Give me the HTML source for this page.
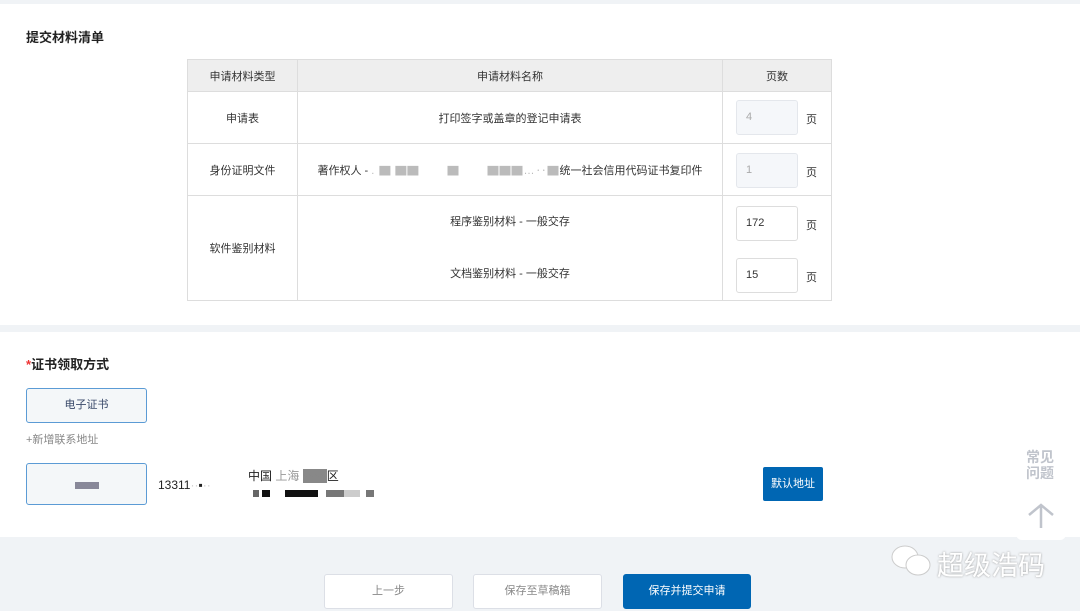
<!DOCTYPE html>
<html><head><meta charset="utf-8"><style>
*{box-sizing:border-box;margin:0;padding:0}
body{width:1080px;height:611px;background:#f0f3f6;font-family:"Liberation Sans","Noto Sans CJK SC",sans-serif;position:relative;overflow:hidden;color:#333;font-size:12px}
.card{position:absolute;left:0;width:1080px;background:#fff}
.abs{position:absolute}
table{border-collapse:collapse;position:absolute;left:187px;top:59px;width:645px}
td,th{border:1px solid #ddd;text-align:center;font-weight:normal;font-size:11px;color:#333;padding:0}
th{background:#eee;height:32px}
.inp{position:absolute;left:736px;width:62px;height:35px;border:1px solid #ddd;border-radius:3px;font-size:11px;padding:0 9px;line-height:33px;color:#333}
.dis{background:#f5f7fa;color:#aaa;border-color:#e4e7ec}
.ye{position:absolute;left:806px;font-size:11px}
.btn{position:absolute;height:35px;border:1px solid #dcdfe6;border-radius:3px;background:#fff;text-align:center;line-height:33px;font-size:11px;color:#888}
.blk{position:absolute;background:#666}
</style></head><body>
<div class="card" style="top:4px;height:321px"></div>
<div class="card" style="top:332px;height:205px"></div>
<div class="abs" style="left:26px;top:27px;font-size:13px;font-weight:bold;color:#222">提交材料清单</div>
<table>
<tr><th style="width:110px">申请材料类型</th><th style="width:425px">申请材料名称</th><th>页数</th></tr>
<tr style="height:52px"><td>申请表</td><td>打印签字或盖章的登记申请表</td><td></td></tr>
<tr style="height:52px"><td>身份证明文件</td><td>著作权人 - <span style="letter-spacing:1px;color:#bbb">. ▇ ▇▇　　 ▇　　 ▇▇▇…‥▇</span>统一社会信用代码证书复印件</td><td></td></tr>
<tr style="height:104px"><td>软件鉴别材料</td><td><div style="height:52px;line-height:52px">程序鉴别材料 - 一般交存</div><div style="height:52px;line-height:52px">文档鉴别材料 - 一般交存</div></td><td></td></tr>
</table>
<div class="inp dis" style="top:100px">4</div><div class="ye" style="top:111px">页</div>
<div class="inp dis" style="top:153px">1</div><div class="ye" style="top:164px">页</div>
<div class="inp" style="top:206px">172</div><div class="ye" style="top:217px">页</div>
<div class="inp" style="top:258px">15</div><div class="ye" style="top:269px">页</div>
<div class="abs" style="left:26px;top:354px;font-size:13px;font-weight:bold;color:#222"><span style="color:#e33">*</span>证书领取方式</div>
<div class="abs" style="left:26px;top:388px;width:121px;height:35px;border:1px solid #5b9bd5;border-radius:3px;background:#f4f7f9;text-align:center;line-height:33px;font-size:11px;color:#3a4a6a">电子证书</div>
<div class="abs" style="left:26px;top:431px;font-size:11px;color:#888">+新增联系地址</div>
<div class="abs" style="left:26px;top:463px;width:121px;height:42px;border:1px solid #5b9bd5;border-radius:3px;background:#f4f7f9"><div class="blk" style="left:48px;top:18px;width:24px;height:7px;background:#889"></div></div>
<div class="abs" style="left:158px;top:478px;font-size:12px;color:#222">13311<span style="color:#ccc">··</span>▪<span style="color:#ccc">··</span></div>
<div class="abs" style="left:248px;top:467px;font-size:12px;color:#222">中国 <span style="color:#999">上海</span> <span style="background:#888;color:#888">xxxx</span>区</div>
<div class="blk" style="left:253px;top:490px;width:6px;height:7px"></div>
<div class="blk" style="left:262px;top:490px;width:8px;height:7px;background:#111"></div>
<div class="blk" style="left:285px;top:490px;width:33px;height:7px;background:#111"></div>
<div class="blk" style="left:326px;top:490px;width:18px;height:7px;background:#777"></div>
<div class="blk" style="left:344px;top:490px;width:16px;height:7px;background:#ccc"></div>
<div class="blk" style="left:366px;top:490px;width:8px;height:7px;background:#777"></div>
<div class="abs" style="left:763px;top:467px;width:60px;height:34px;background:#0066b3;border-radius:2px;color:#fff;text-align:center;line-height:34px;font-size:11px">默认地址</div>
<div class="abs" style="left:1016px;top:440px;width:50px;height:100px;background:#fff;border-radius:6px"></div>
<div class="abs" style="left:1026px;top:449px;font-size:14px;line-height:16px;color:#c0c4cc;font-weight:bold">常见<br>问题</div>
<svg class="abs" style="left:1027px;top:503px" width="28" height="26"><path d="M2 12 L14 2 L26 12 M14 2 V25" stroke="#c0c4cc" stroke-width="2.5" fill="none"/></svg>
<svg class="abs" style="left:890px;top:544px" width="45" height="36"><ellipse cx="15" cy="13" rx="13" ry="11" fill="#fff" stroke="#ccc"/><ellipse cx="28" cy="21" rx="12" ry="10" fill="#fff" stroke="#ccc"/></svg>
<div class="abs" style="left:937px;top:544px;font-size:27px;color:#fff;text-shadow:0 0 2px #999">超级浩码</div>
<div class="btn" style="left:324px;top:574px;width:129px">上一步</div>
<div class="btn" style="left:473px;top:574px;width:129px">保存至草稿箱</div>
<div class="btn" style="left:623px;top:574px;width:128px;background:#0066b3;border-color:#0066b3;color:#fff">保存并提交申请</div>
</body></html>
